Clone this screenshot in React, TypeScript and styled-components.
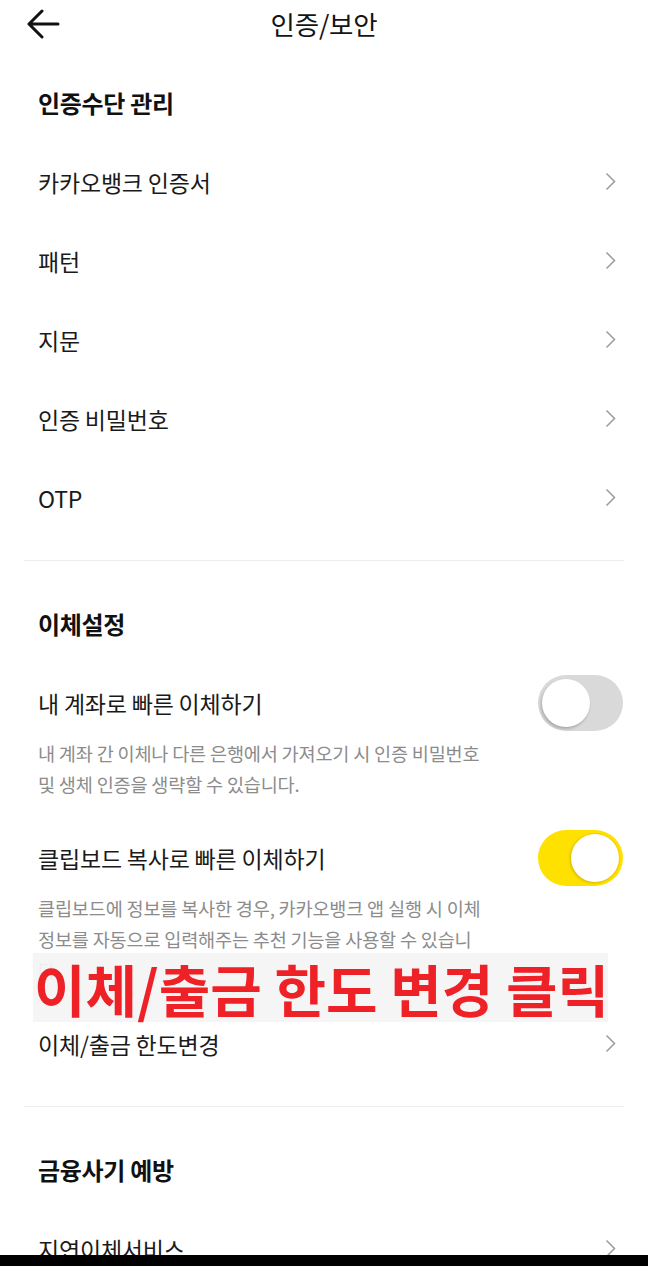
import React, { useState } from 'react';
import styled, { createGlobalStyle } from 'styled-components';

/* ── Global ── */

const GlobalStyle = createGlobalStyle`
  html, body {
    margin: 0;
    padding: 0;
    background: #fff;
  }
  body {
    font-family: 'Noto Sans CJK KR', 'Noto Sans', sans-serif;
    color: #161616;
    -webkit-font-smoothing: antialiased;
  }
  * { box-sizing: border-box; }
`;

/* ── Styled Components ── */

const Screen = styled.div`
  position: relative;
  width: 648px;
  height: 1266px;
  display: flex;
  flex-direction: column;
  overflow: hidden;
  background: #fff;
`;

const Header = styled.header`
  position: relative;
  height: 46px;
  flex-shrink: 0;
  display: flex;
  align-items: center;
  justify-content: center;
`;

const BackButton = styled.button`
  position: absolute;
  left: 25px;
  top: 8px;
  width: 36px;
  height: 32px;
  padding: 0;
  border: 0;
  background: none;
  display: flex;
  align-items: center;
  justify-content: center;
  cursor: pointer;
`;

const HeaderTitle = styled.h1`
  margin: 0;
  font-size: 26.5px;
  font-weight: 400;
  color: #141414;
  letter-spacing: -0.2px;
`;

const Content = styled.main`
  flex: 1;
  min-height: 0;
  overflow: hidden;
  padding: 0 24px;
`;

const Section = styled.section<{ $first?: boolean; $last?: boolean }>`
  padding: ${({ $first }) => ($first ? '17px' : '23px')} 0
    ${({ $last }) => ($last ? '0' : '23px')};
  border-bottom: ${({ $last }) => ($last ? 'none' : '1px solid #ececec')};
`;

const SectionTitle = styled.h2`
  margin: 0;
  height: 79px;
  padding-left: 14px;
  display: flex;
  align-items: center;
  font-size: 24px;
  font-weight: 700;
  color: #111;
  letter-spacing: -0.3px;
`;

const LinkRow = styled.div`
  height: 79px;
  padding: 0 8px 0 14px;
  display: flex;
  align-items: center;
  justify-content: space-between;
  cursor: pointer;
`;

const RowLabel = styled.span`
  font-size: 23px;
  font-weight: 400;
  color: #1a1a1a;
  letter-spacing: -0.2px;
`;

const ToggleBlock = styled.div`
  padding-bottom: 19px;
`;

const ToggleRow = styled.div`
  height: 79px;
  padding: 0 1px 0 14px;
  display: flex;
  align-items: center;
  justify-content: space-between;
`;

const Desc = styled.p`
  margin: -5px 0 0;
  padding: 0 0 0 14px;
  font-size: 18.6px;
  line-height: 31px;
  color: #8c8c8c;
  letter-spacing: -0.2px;
  white-space: nowrap;
`;

const Track = styled.button<{ $on: boolean }>`
  width: 85px;
  height: 56px;
  padding: 4px;
  border: 0;
  border-radius: 28px;
  background: ${({ $on }) => ($on ? '#ffe100' : '#d9d9d9')};
  display: flex;
  align-items: center;
  justify-content: ${({ $on }) => ($on ? 'flex-end' : 'flex-start')};
  cursor: pointer;
  flex-shrink: 0;
`;

const Knob = styled.span<{ $on: boolean }>`
  width: 48px;
  height: 48px;
  border-radius: 50%;
  background: #fff;
  box-shadow: ${({ $on }) =>
    $on
      ? '0 0 0 1px rgba(230, 200, 0, 0.6), -1px 1px 3px rgba(0,0,0,0.18)'
      : '-1px 2px 3px rgba(0, 0, 0, 0.22)'};
`;

const Callout = styled.div`
  position: absolute;
  left: 33px;
  top: 953px;
  width: 575px;
  height: 69px;
  background: rgba(244, 244, 244, 0.93);
  display: flex;
  align-items: center;
  padding-left: 1px;
  font-size: 56px;
  font-weight: 700;
  color: #ee2127;
  letter-spacing: 0;
  white-space: nowrap;
  pointer-events: none;
`;

const NavBar = styled.div`
  height: 11px;
  flex-shrink: 0;
  background: #000;
`;

/* ── Icons ── */

const BackArrow = () => (
  <svg width="34" height="30" viewBox="0 0 34 30" fill="none">
    <path
      d="M32 15H3M16 2L3 15L16 28"
      stroke="#111"
      strokeWidth="3"
      strokeLinecap="round"
      strokeLinejoin="round"
    />
  </svg>
);

const Chevron = () => (
  <svg width="11" height="19" viewBox="0 0 11 19" fill="none">
    <path d="M1.5 1.5L9.5 9.5L1.5 17.5" stroke="#9a9a9a" strokeWidth="1.5" />
  </svg>
);

/* ── Parts ── */

const Toggle: React.FC<{ on: boolean; onChange: (v: boolean) => void }> = ({ on, onChange }) => (
  <Track $on={on} onClick={() => onChange(!on)} aria-pressed={on}>
    <Knob $on={on} />
  </Track>
);

const Link: React.FC<{ label: string }> = ({ label }) => (
  <LinkRow>
    <RowLabel>{label}</RowLabel>
    <Chevron />
  </LinkRow>
);

const ToggleItem: React.FC<{
  label: string;
  lines: string[];
  on: boolean;
  onChange: (v: boolean) => void;
}> = ({ label, lines, on, onChange }) => (
  <ToggleBlock>
    <ToggleRow>
      <RowLabel>{label}</RowLabel>
      <Toggle on={on} onChange={onChange} />
    </ToggleRow>
    <Desc>
      {lines.map((line, i) => (
        <React.Fragment key={i}>
          {i > 0 && <br />}
          {line}
        </React.Fragment>
      ))}
    </Desc>
  </ToggleBlock>
);

/* ── Component ── */

const authItems = ['카카오뱅크 인증서', '패턴', '지문', '인증 비밀번호', 'OTP'];

const App: React.FC = () => {
  const [quickOwn, setQuickOwn] = useState(false);
  const [clipboard, setClipboard] = useState(true);

  return (
    <Screen>
      <GlobalStyle />
      <Header>
        <BackButton aria-label="뒤로">
          <BackArrow />
        </BackButton>
        <HeaderTitle>인증/보안</HeaderTitle>
      </Header>

      <Content>
        {/* 인증수단 관리 */}
        <Section $first>
          <SectionTitle>인증수단 관리</SectionTitle>
          {authItems.map((label) => (
            <Link key={label} label={label} />
          ))}
        </Section>

        {/* 이체설정 */}
        <Section>
          <SectionTitle>이체설정</SectionTitle>
          <ToggleItem
            label="내 계좌로 빠른 이체하기"
            lines={['내 계좌 간 이체나 다른 은행에서 가져오기 시 인증 비밀번호', '및 생체 인증을 생략할 수 있습니다.']}
            on={quickOwn}
            onChange={setQuickOwn}
          />
          <ToggleItem
            label="클립보드 복사로 빠른 이체하기"
            lines={[
              '클립보드에 정보를 복사한 경우, 카카오뱅크 앱 실행 시 이체',
              '정보를 자동으로 입력해주는 추천 기능을 사용할 수 있습니',
              '다.',
            ]}
            on={clipboard}
            onChange={setClipboard}
          />
          <Link label="이체/출금 한도변경" />
        </Section>

        {/* 금융사기 예방 */}
        <Section $last>
          <SectionTitle>금융사기 예방</SectionTitle>
          <Link label="지연이체서비스" />
        </Section>
      </Content>

      <NavBar />

      <Callout>이체/출금 한도 변경 클릭</Callout>
    </Screen>
  );
};

export default App;
